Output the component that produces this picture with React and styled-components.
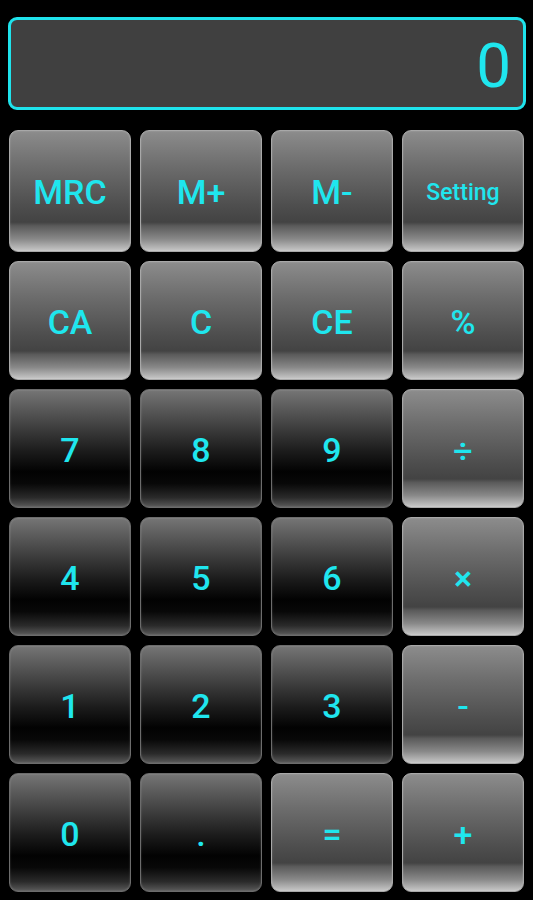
import React from "react";
import styled, { createGlobalStyle } from "styled-components";

const GlobalStyle = createGlobalStyle`
    html, body {
        margin: 0;
        padding: 0;
        background: #000;
    }
    body {
        font-family: Roboto, "Liberation Sans", sans-serif;
    }
`;

const keys = [
    { label: "MRC", kind: "light" },
    { label: "M+", kind: "light" },
    { label: "M-", kind: "light" },
    { label: "Setting", kind: "light", small: true },
    { label: "CA", kind: "light" },
    { label: "C", kind: "light" },
    { label: "CE", kind: "light" },
    { label: "%", kind: "light" },
    { label: "7", kind: "dark" },
    { label: "8", kind: "dark" },
    { label: "9", kind: "dark" },
    { label: "÷", kind: "light" },
    { label: "4", kind: "dark" },
    { label: "5", kind: "dark" },
    { label: "6", kind: "dark" },
    { label: "×", kind: "light" },
    { label: "1", kind: "dark" },
    { label: "2", kind: "dark" },
    { label: "3", kind: "dark" },
    { label: "-", kind: "light" },
    { label: "0", kind: "dark" },
    { label: ".", kind: "dark" },
    { label: "=", kind: "light" },
    { label: "+", kind: "light" },
];

export default function App() {
    return (
        <Screen>
            <GlobalStyle />
            <Display>
                <Readout>0</Readout>
            </Display>
            <Keypad>
                {keys.map((k) => (
                    <Key key={k.label} $kind={k.kind} $small={k.small}>
                        {k.label}
                    </Key>
                ))}
            </Keypad>
        </Screen>
    );
}

const Screen = styled.div`
    width: 533px;
    height: 900px;
    background: #000;
    box-sizing: border-box;
    padding: 17px 7px 0 8px;
    display: flex;
    flex-direction: column;
    gap: 20px;
`;

const Display = styled.div`
    height: 93px;
    box-sizing: border-box;
    border: 3px solid #1fe3ec;
    border-radius: 9px;
    background: #404040;
    display: flex;
    align-items: center;
    justify-content: flex-end;
    padding: 4px 12px 0 0;
`;

const Readout = styled.span`
    color: #1fe6ee;
    font-family: Roboto, "Liberation Sans", sans-serif;
    font-weight: 400;
    font-size: 62px;
    line-height: 1;
`;

const Keypad = styled.div`
    display: grid;
    grid-template-columns: repeat(4, 122px);
    grid-template-rows: 122px repeat(5, 119px);
    column-gap: 9px;
    row-gap: 9px;
    padding-left: 1px;
`;

const lightBg = `linear-gradient(
    to bottom,
    #8c8c8c 0%,
    #6c6c6c 30%,
    #4e4e4e 62%,
    #434343 76%,
    #5a5a5a 79%,
    #888888 90%,
    #c8c8c8 100%
)`;

const darkBg = `linear-gradient(
    to bottom,
    #757575 0%,
    #4a4a4a 25%,
    #1c1c1c 52%,
    #020202 70%,
    #080808 80%,
    #2a2a2a 92%,
    #5a5a5a 100%
)`;

const Key = styled.div`
    box-sizing: border-box;
    border-radius: 9px;
    border: 1px solid ${(p) => (p.$kind === "light" ? "#a8a8a8" : "#6c6c6c")};
    background: ${(p) => (p.$kind === "light" ? lightBg : darkBg)};
    box-shadow: inset 0 0 2px rgba(255, 255, 255, 0.25);
    display: flex;
    align-items: center;
    justify-content: center;
    color: #1fe6ee;
    font-family: Roboto, "Liberation Sans", sans-serif;
    font-weight: 500;
    font-size: ${(p) => (p.$small ? "23px" : "34px")};
    padding-top: 2px;
`;
